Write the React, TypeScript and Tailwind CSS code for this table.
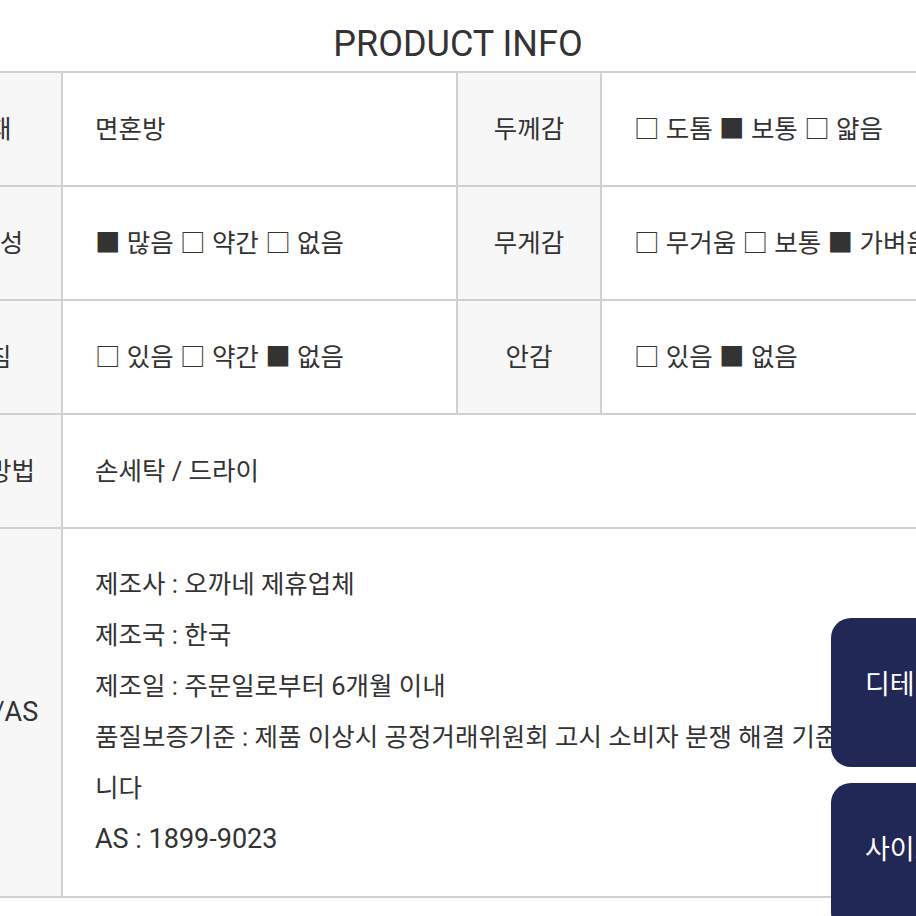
import React from 'react';

interface InfoRow {
  label: string;
  value: React.ReactNode;
  label2?: string;
  value2?: React.ReactNode;
}

const rows: InfoRow[] = [
  { label: '소재', value: '면혼방', label2: '두께감', value2: '□ 도톰 ■ 보통 □ 얇음' },
  { label: '신축성', value: '■ 많음 □ 약간 □ 없음', label2: '무게감', value2: '□ 무거움 □ 보통 ■ 가벼움' },
  { label: '비침', value: '□ 있음 □ 약간 ■ 없음', label2: '안감', value2: '□ 있음 ■ 없음' },
  { label: '세탁방법', value: '손세탁 / 드라이' },
];

const asLines = [
  '제조사 : 오까네 제휴업체',
  '제조국 : 한국',
  '제조일 : 주문일로부터 6개월 이내',
];

const App: React.FC = () => {
  return (
    <div
      className="relative w-[916px] h-[916px] overflow-hidden bg-white text-[#333]"
      style={{ fontFamily: "Roboto, 'Noto Sans CJK KR', sans-serif" }}
    >
      <h1 className="pt-[22px] mb-[5px] text-center text-[36px] leading-[44px] font-normal">
        PRODUCT INFO
      </h1>

      {/* Info table, wider than the viewport on both sides */}
      <div className="ml-[-87px] w-[1150px] grid grid-cols-[146px_393px_142px_461px] gap-[2px] p-[2px] bg-[#d0d0d0] text-[25.5px]">
        {rows.map((row) => (
          <React.Fragment key={row.label}>
            <div className="h-[112px] bg-[#f7f7f7] flex items-center justify-center">{row.label}</div>
            {row.label2 ? (
              <>
                <div className="h-[112px] bg-white flex items-center pl-8">{row.value}</div>
                <div className="h-[112px] bg-[#f7f7f7] flex items-center justify-center">{row.label2}</div>
                <div className="h-[112px] bg-white flex items-center pl-8">{row.value2}</div>
              </>
            ) : (
              <div className="col-span-3 h-[112px] bg-white flex items-center pl-8">{row.value}</div>
            )}
          </React.Fragment>
        ))}
        <div className="bg-[#f7f7f7] flex items-center justify-center pl-[6px] text-[27px]">품질/AS</div>
        <div className="col-span-3 bg-white pl-8 pr-8 pt-[30px] pb-[31px] leading-[51px]">
          {asLines.map((line) => (
            <p key={line}>{line}</p>
          ))}
          <p>
            품질보증기준 : 제품 이상시 공정거래위원회 고시 소비자 분쟁 해결 기준에 따라 보상합
            <br />
            니다
          </p>
          <p className="text-[27px]">AS : 1899-9023</p>
        </div>
      </div>

      {/* Floating side buttons */}
      <div className="absolute left-[831px] top-[618px] flex flex-col gap-[16px]">
        <button className="w-[140px] h-[149px] rounded-[20px] bg-[#222856] text-white text-[27px] text-left pl-[34px] pb-[14px]">
          디테일
        </button>
        <button className="w-[140px] h-[149px] rounded-[20px] bg-[#222856] text-white text-[27px] text-left pl-[34px] pb-[14px]">
          사이즈
        </button>
      </div>
    </div>
  );
};

export default App;
